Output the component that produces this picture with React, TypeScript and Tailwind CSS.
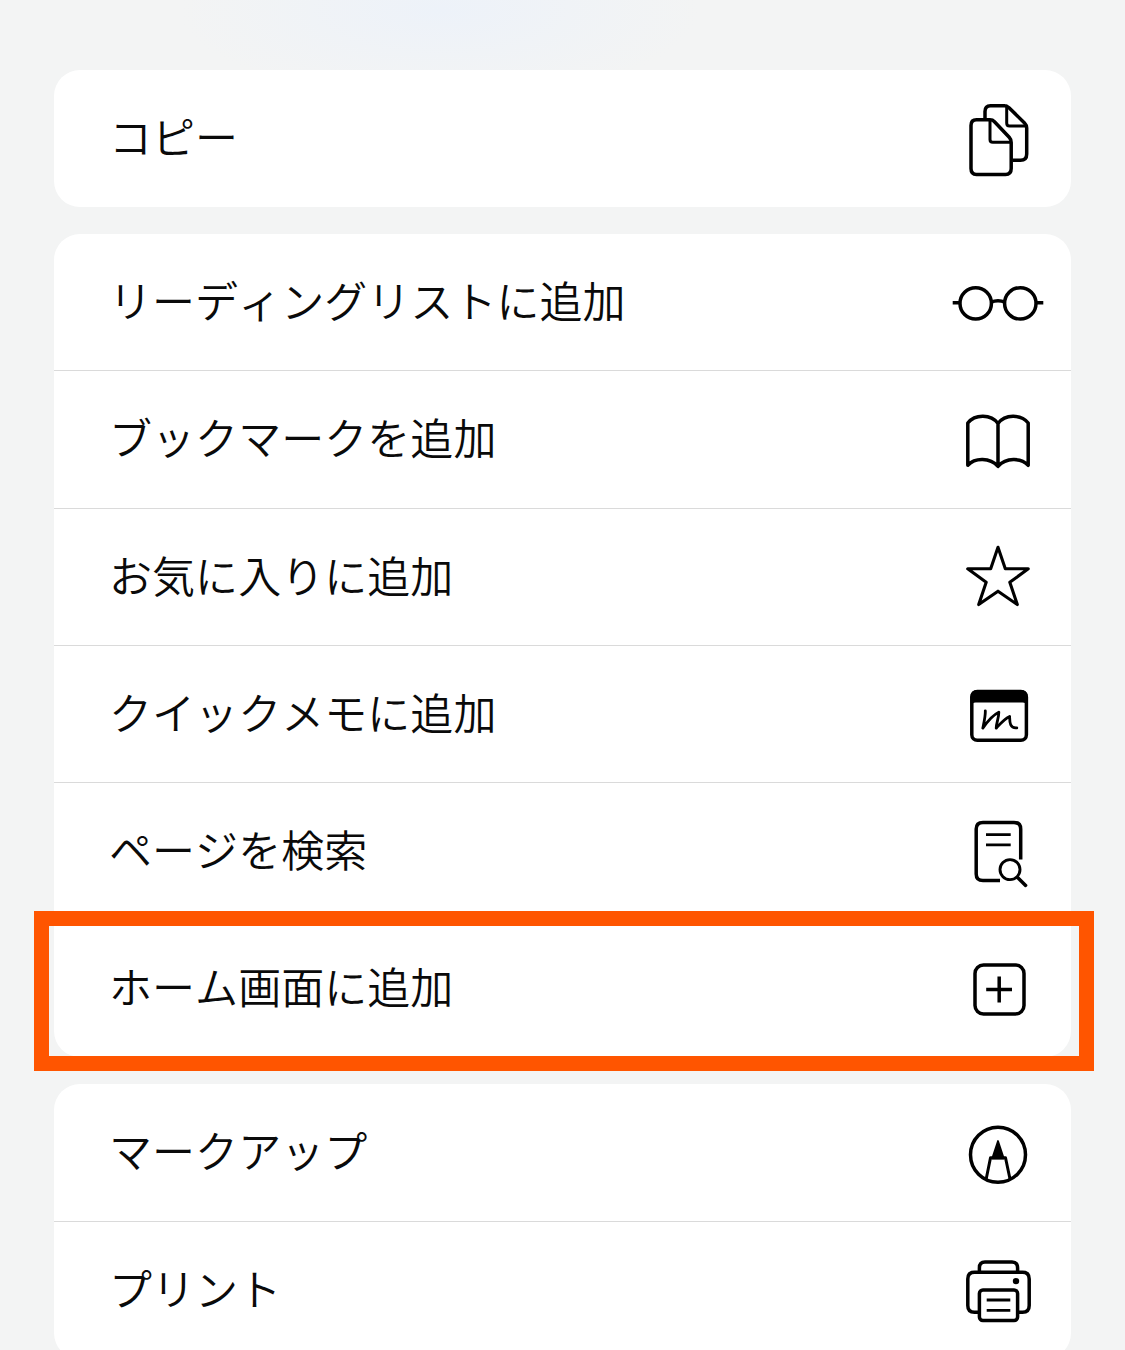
import type { ReactNode } from "react";

function Icon({ children }: { children: ReactNode }) {
  return (
    <svg
      viewBox="0 0 96 96"
      className="size-24 shrink-0"
      fill="none"
      stroke="#000"
      strokeWidth={3.5}
      strokeLinecap="round"
      strokeLinejoin="round"
      aria-hidden="true"
    >
      {children}
    </svg>
  );
}

const CopyIcon = () => (
  <Icon>
    <path d="M35 28.5V20.5Q35 14.7 40.5 14.7H54.5Q57 14.7 59 16.7L74.5 32Q76.7 34.2 76.7 37V63Q76.7 69.3 70.5 69.3H62.5" strokeLinecap="butt" />
    <path d="M56.7 15V32Q56.7 35 59.5 35H76" strokeWidth={3} />
    <path d="M26.5 28.8H40Q42.6 28.8 44.5 30.7L59.2 46.3Q61.2 48.5 61.2 51.5V77.5Q61.2 83.4 55.5 83.4H26.5Q21 83.4 21 77.5V34.5Q21 28.8 26.5 28.8Z" />
    <path d="M40 30V48.5Q40 51.3 42.8 51.3H60.5" strokeWidth={3} />
  </Icon>
);

const GlassesIcon = () => (
  <Icon>
    <circle cx="25.7" cy="48.4" r="15.7" />
    <circle cx="70.3" cy="48.4" r="15.7" />
    <path d="M41 47.2Q48 44.2 55 47.2M2.7 47.7H10M86 47.7H93.3" strokeLinecap="butt" />
  </Icon>
);

const BookIcon = () => (
  <Icon>
    <path d="M48 31.5C41 22 25 22 17.8 31V73.3C25 65.5 40 65.5 48 74.4C56 65.5 71 65.5 78.2 73.3V31C71 22 55 22 48 31.5V73.5" />
  </Icon>
);

const StarIcon = () => (
  <Icon>
    <path d="M48 18.3L55.3 39.8H78.3L59.8 53.3L67.3 75.6L48 62.2L28.7 75.6L36.2 53.3L17.7 39.8H40.7Z" strokeWidth={3.1} />
  </Icon>
);

const QuickNoteIcon = () => (
  <Icon>
    <rect x="21.8" y="25.4" width="54.6" height="48.9" rx="5.5" />
    <path d="M21.8 36.5V31Q21.8 25.4 27.3 25.4H70.9Q76.4 25.4 76.4 31V36.5Q75 35.3 72.5 35.3H25.7Q23.2 35.3 21.8 36.5Z" fill="#000" strokeWidth={2.6} />
    <path d="M35.3 44.8C35.6 50 33.8 57 32.8 62.2C37 56 42 49.500 48.800 46.200C49 51.500 46.200 57 46.200 62.200C50 58 54 53 59.600 50.400C59.800 55 59.200 62.500 66.800 61.800" strokeWidth={2.8} />
  </Icon>
);

const FindIcon = () => (
  <Icon>
    <path d="M50 76.6H33Q26.2 76.6 26.2 70V25Q26.2 18.4 33 18.4H64Q70.7 18.4 70.7 25V55.5" strokeLinecap="butt" />
    <path d="M36 30.6H60.7M36 40.9H60.7" strokeWidth={2.8} strokeLinecap="butt" />
    <circle cx="60" cy="65.6" r="10" strokeWidth={2.9} />
    <path d="M67.6 73.6L75.6 81.4" />
  </Icon>
);

const AddSquareIcon = () => (
  <Icon>
    <rect x="25" y="23.9" width="49" height="49" rx="8.5" />
    <path d="M36.2 48.4H62M49.2 35.5V61.4" strokeLinecap="butt" />
  </Icon>
);

const MarkupIcon = () => (
  <Icon>
    <circle cx="48" cy="49.7" r="27.5" />
    <path d="M36.2 74L40.5 52.8H55.5L60 74" strokeWidth={3} strokeLinecap="butt" />
    <path d="M48 36L53.8 53.5H42.2Z" fill="#000" strokeWidth={1.8} />
  </Icon>
);

const PrinterIcon = () => (
  <Icon>
    <path d="M29.4 30V26Q29.4 20.1 35 20.1H62Q67.6 20.1 67.6 26V30" />
    <path d="M29 70.3H24.5Q17.8 70.3 17.8 63.5V37Q17.8 30.3 24.5 30.3H72.5Q79.2 30.3 79.2 37V63.5Q79.2 70.3 72.5 70.3H68" />
    <rect x="29.4" y="48" width="38.2" height="30.6" rx="3.5" />
    <path d="M36.7 58H60.3M36.7 68.3H60.3" strokeWidth={2.8} strokeLinecap="butt" />
    <circle cx="66" cy="39.1" r="3.2" fill="#000" stroke="none" />
  </Icon>
);

type Item = { label: string; icon: ReactNode };

const groups: Item[][] = [
  [{ label: "コピー", icon: <CopyIcon /> }],
  [
    { label: "リーディングリストに追加", icon: <GlassesIcon /> },
    { label: "ブックマークを追加", icon: <BookIcon /> },
    { label: "お気に入りに追加", icon: <StarIcon /> },
    { label: "クイックメモに追加", icon: <QuickNoteIcon /> },
    { label: "ページを検索", icon: <FindIcon /> },
    { label: "ホーム画面に追加", icon: <AddSquareIcon /> },
  ],
  [
    { label: "マークアップ", icon: <MarkupIcon /> },
    { label: "プリント", icon: <PrinterIcon /> },
  ],
];

export default function App() {
  return (
    <main
      lang="ja"
      className="relative flex h-[1350px] w-[1125px] flex-col gap-[27px] overflow-hidden bg-[#f3f4f4] bg-[radial-gradient(ellipse_260px_90px_at_440px_10px,#edf2f9,transparent)] pt-[70px] pr-[54px] pl-[54px] font-['Noto_Sans_CJK_JP',sans-serif] text-[#0a0a0a]"
    >
      {groups.map((items, g) => (
        <ul key={g} className="shrink-0 overflow-hidden rounded-[26px] bg-white">
          {items.map((item, i) => (
            <li
              key={item.label}
              className={
                "flex h-[137.2px] items-center justify-between pr-[25px] pl-[55px] " +
                (i < items.length - 1 ? "shadow-[inset_0_-1px_0_#dadada]" : "")
              }
            >
              <span className="pb-[6px] text-[43px] leading-none font-[350] tracking-[0.05px] whitespace-nowrap [font-kerning:none]">
                {item.label}
              </span>
              {item.icon}
            </li>
          ))}
        </ul>
      ))}
      <div className="absolute top-[911px] left-[34px] h-[160px] w-[1060px] border-[15px] border-[#ff5500]" />
    </main>
  );
}
